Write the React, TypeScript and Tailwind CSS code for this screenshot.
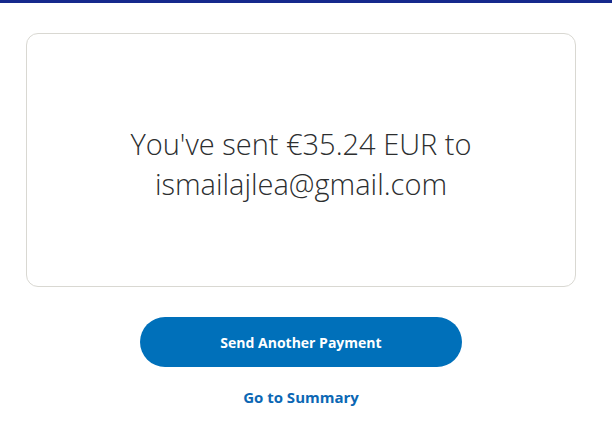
export default function App() {
  return (
    <div className="w-[612px] h-[448px] bg-white overflow-hidden" style={{ fontFamily: '"Open Sans", "Liberation Sans", sans-serif' }}>
      <div className="h-[3px] bg-[#15298c]" />
      <div className="w-[602px] flex flex-col items-center">
        <div className="mt-[30px] w-[550px] h-[254px] rounded-[12px] border border-[#d9d8d2] flex items-center justify-center">
          <p className="text-center text-[29px] leading-[40px] font-light text-[#2c2e2f] mt-[8px]">
            You've sent €35.24 EUR to<br />ismailajlea@gmail.com
          </p>
        </div>
        <button className="mt-[30px] w-[322px] h-[50px] rounded-full bg-[#0070ba] text-white text-[14px] font-bold">
          Send Another Payment
        </button>
        <a className="mt-[19px] text-[15px] font-bold text-[#0b67b4]">Go to Summary</a>
      </div>
    </div>
  );
}
